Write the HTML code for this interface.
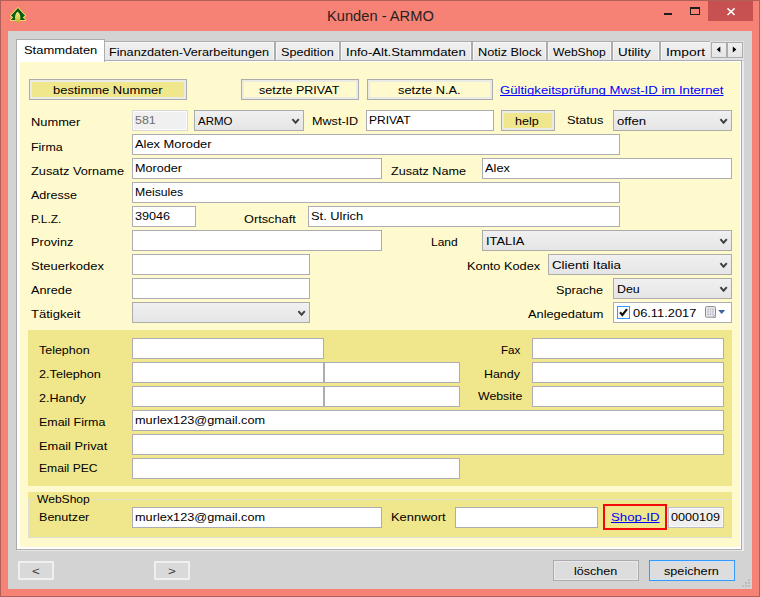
<!DOCTYPE html>
<html><head><meta charset="utf-8"><title>Kunden - ARMO</title>
<style>
html,body{margin:0;padding:0}
body{width:760px;height:597px;position:relative;overflow:hidden;background:#f58274;font-family:"Liberation Sans",sans-serif;font-size:11.5px;color:#000}
body *{box-sizing:border-box}
#frame{position:absolute;left:0;top:0;width:760px;height:597px;border:1px solid #b25f58}
#client{position:absolute;left:8px;top:31px;width:744px;height:558px;background:#d3d3d3}
#ico{position:absolute;left:8px;top:5px}
.t{position:absolute;white-space:nowrap;line-height:14px;transform-origin:0 50%;display:block}
.lnk{text-decoration:underline;text-decoration-skip-ink:none;text-decoration-thickness:1px;text-underline-offset:1px}
.tab{position:absolute;border:1px solid #acacac;border-bottom:none;background:linear-gradient(#f0f0f0,#e6e6e6);box-shadow:inset 1px 1px 0 #f7f7f7,inset -1px 0 0 #f7f7f7}
#page{position:absolute;left:16px;top:60px;width:726px;height:490px;border:1px solid #acacac;background:#fff}
#pagehl{position:absolute;left:17px;top:550px;width:727px;height:1px;background:#e9e9e9}
#pagehl:after{content:"";position:absolute;left:725px;top:-489px;width:2px;height:490px;background:#ececec}
#lemon{position:absolute;left:20px;top:62px;width:720px;height:485px;background:#fffacd}
#seltab{position:absolute;left:16px;top:39px;width:89px;height:23px;border:1px solid #acacac;border-bottom:none;background:#fff}
.sbtn{position:absolute;width:16px;height:16px;border:1px solid #acacac;background:linear-gradient(#f0f0f0,#e5e5e5)}
.sbtn svg{display:block}
.tb{position:absolute;border:1px solid #abadb3;background:#fff}
.tbd{position:absolute;border:1px solid #d9d9d9;background:#f0f0f0;box-shadow:inset 0 0 0 1px #fbfbfb}
.tbr{position:absolute;border:1px solid #bcbfc6;background:#f0f0f0;box-shadow:inset 0 0 0 1px #fafafa}
.cb{position:absolute;border:1px solid #acacac;background:linear-gradient(#f0f0f0,#e5e5e5)}
.chev{position:absolute;right:3px;top:7px}
.ybtn,.lbtn{position:absolute;border:1px solid #acacac;background:#ebebe6}
.ybtn i,.lbtn i{position:absolute;left:2px;top:2px;right:2px;bottom:2px;background:#f0e68c}
.lbtn i{background:#fffacd}
.khaki{position:absolute;background:#f0e68c}
#grp{position:absolute;left:28px;top:499px;width:704px;height:39px;border:1px solid #dfdfd2}
.fbtn{position:absolute;border:2px solid #efefef;background:#d9d9d9}
.wbtn{position:absolute;border:1px solid #acacac;background:#dddddd;box-shadow:inset 0 0 0 1px #e9e9e9}
.wbtn.def{border-color:#3399ff;box-shadow:inset 0 0 0 1px #cfe3f7}
#chk{position:absolute;left:617px;top:306px;width:13px;height:13px;border:1px solid #3399ff;background:#fff}
#chk svg{display:block}
</style></head>
<body>
<div id="frame"></div>
<div id="client"></div>
<svg id="ico" width="20" height="20" viewBox="8 5 20 20">
<defs><linearGradient id="cone" x1="0" y1="0" x2="0" y2="1"><stop offset="0" stop-color="#f2ee8a"/><stop offset="0.5" stop-color="#d9d458"/><stop offset="1" stop-color="#b5ab30"/></linearGradient></defs>
<path d="M18 8.1 L25.1 15.8 L22.7 17.3 L25.2 20 L10.8 20 L13.3 17.3 L10.9 15.8 Z" fill="#0a5a18" stroke="#f4ef58" stroke-width="1.7" stroke-linejoin="round" style="paint-order:stroke"/>
<path d="M17.6 11.8 C18.8 12.2 20.4 14.6 20.4 17.6 C20.4 20.8 19.3 22.9 17.7 22.9 C16.1 22.9 15.0 20.8 15.0 17.6 C15.0 14.8 16.5 12.2 17.6 11.8 Z" fill="url(#cone)"/>
</svg>
<span class="t " style="left:326.60px;top:8.80px;font-size:15px;transform:scaleX(0.9779);color:#2b2020;">Kunden - ARMO</span>
<div style="position:absolute;left:664px;top:13px;width:8px;height:2px;background:#1e1e1e"></div>
<div style="position:absolute;left:690px;top:7px;width:10px;height:8px;box-sizing:border-box;border:1px solid #1e1e1e;border-top-width:2px"></div>
<div style="position:absolute;left:708px;top:1px;width:45px;height:20px;background:#c75050"></div>
<svg style="position:absolute;left:726px;top:7px" width="10" height="10" viewBox="0 0 10 10"><path d="M1.5 1.4 L8.6 8.0 M8.6 1.4 L1.5 8.0" stroke="#fff" stroke-width="1.5" fill="none"/></svg>
<div class="tab" style="left:103px;top:41px;width:172px;height:20px;"></div>
<div class="tab" style="left:275px;top:41px;width:65px;height:20px;"></div>
<div class="tab" style="left:340px;top:41px;width:132px;height:20px;"></div>
<div class="tab" style="left:472px;top:41px;width:75px;height:20px;"></div>
<div class="tab" style="left:547px;top:41px;width:65px;height:20px;"></div>
<div class="tab" style="left:612px;top:41px;width:48px;height:20px;"></div>
<div class="tab" style="left:660px;top:41px;width:52px;height:20px;"></div>
<span class="t " style="left:109.10px;top:45.02px;font-size:11.5px;transform:scaleX(1.1028);">Finanzdaten-Verarbeitungen</span>
<span class="t " style="left:281.20px;top:45.02px;font-size:11.5px;transform:scaleX(1.0989);">Spedition</span>
<span class="t " style="left:346.30px;top:45.02px;font-size:11.5px;transform:scaleX(1.1419);">Info-Alt.Stammdaten</span>
<span class="t " style="left:477.70px;top:45.02px;font-size:11.5px;transform:scaleX(1.1072);">Notiz Block</span>
<span class="t " style="left:553.00px;top:45.02px;font-size:11.5px;transform:scaleX(1.0497);">WebShop</span>
<span class="t " style="left:617.60px;top:45.02px;font-size:11.5px;transform:scaleX(1.1635);">Utility</span>
<span class="t " style="left:665.90px;top:45.02px;font-size:11.5px;transform:scaleX(1.1997);">Import</span>
<div style="position:absolute;left:710px;top:41px;width:34px;height:19px;background:#e2e2e2"></div>
<div id="page"></div>
<div id="pagehl"></div>
<div id="lemon"></div>
<div id="seltab"></div>
<span class="t " style="left:23.90px;top:43.02px;font-size:11.5px;transform:scaleX(1.1243);">Stammdaten</span>
<div class="sbtn" style="left:711px;top:42px"><svg width="14" height="14" viewBox="0 0 14 14"><path d="M8.3 3.4 L8.3 9.6 L4.7 6.5 Z" fill="#000"/></svg></div>
<div class="sbtn" style="left:727px;top:42px"><svg width="14" height="14" viewBox="0 0 14 14"><path d="M4.8 3.4 L4.8 9.6 L8.4 6.5 Z" fill="#000"/></svg></div>
<div class="ybtn" style="left:29px;top:79px;width:158px;height:21px;"><i></i></div>
<span class="t " style="left:52.85px;top:82.77px;font-size:11.5px;transform:scaleX(1.1279);">bestimme Nummer</span>
<div class="lbtn" style="left:241px;top:79px;width:118px;height:21px;"><i></i></div>
<span class="t " style="left:258.70px;top:82.82px;font-size:11.5px;transform:scaleX(1.0895);">setzte PRIVAT</span>
<div class="lbtn" style="left:367px;top:79px;width:126px;height:21px;"><i></i></div>
<span class="t " style="left:397.70px;top:82.72px;font-size:11.5px;transform:scaleX(1.1130);">setzte N.A.</span>
<span class="t lnk" style="left:499.90px;top:83.02px;font-size:11.5px;transform:scaleX(1.1428);color:#0000ff;">Gültigkeitsprüfung Mwst-ID im Internet</span>
<span class="t " style="left:31.00px;top:115.42px;font-size:11.5px;transform:scaleX(1.1181);">Nummer</span>
<div class="tbd" style="left:132px;top:110px;width:56px;height:21px;"></div>
<span class="t " style="left:134.90px;top:113.02px;font-size:11.5px;transform:scaleX(1.0843);color:#6d6d6d;">581</span>
<div class="cb" style="left:194px;top:110px;width:110px;height:21px;"><svg class="chev" width="9" height="7" viewBox="0 0 9 7"><path d="M1.4 1.1 L4.6 4.7 L7.8 1.1" fill="none" stroke="#404040" stroke-width="1.9"/></svg></div>
<span class="t " style="left:197.80px;top:114.02px;font-size:11.5px;transform:scaleX(0.9971);">ARMO</span>
<span class="t " style="left:312.00px;top:114.02px;font-size:11.5px;transform:scaleX(1.0959);">Mwst-ID</span>
<div class="tb" style="left:366px;top:110px;width:128px;height:21px;"></div>
<span class="t " style="left:368.90px;top:113.02px;font-size:11.5px;transform:scaleX(1.0421);">PRIVAT</span>
<div class="ybtn" style="left:501px;top:110px;width:54px;height:21px;"><i></i></div>
<span class="t " style="left:515.30px;top:113.52px;font-size:11.5px;transform:scaleX(1.0898);">help</span>
<span class="t " style="left:567.00px;top:113.02px;font-size:11.5px;transform:scaleX(1.1134);">Status</span>
<div class="cb" style="left:613px;top:110px;width:119px;height:21px;"><svg class="chev" width="9" height="7" viewBox="0 0 9 7"><path d="M1.4 1.1 L4.6 4.7 L7.8 1.1" fill="none" stroke="#404040" stroke-width="1.9"/></svg></div>
<span class="t " style="left:616.80px;top:114.02px;font-size:11.5px;transform:scaleX(1.1431);">offen</span>
<span class="t " style="left:31.00px;top:139.82px;font-size:11.5px;transform:scaleX(1.0785);">Firma</span>
<div class="tb" style="left:132px;top:134px;width:488px;height:21px;"></div>
<span class="t " style="left:134.90px;top:137.02px;font-size:11.5px;transform:scaleX(1.1186);">Alex Moroder</span>
<span class="t " style="left:31.00px;top:163.62px;font-size:11.5px;transform:scaleX(1.1107);">Zusatz Vorname</span>
<div class="tb" style="left:132px;top:158px;width:250px;height:21px;"></div>
<span class="t " style="left:134.90px;top:161.02px;font-size:11.5px;transform:scaleX(1.0951);">Moroder</span>
<span class="t " style="left:390.90px;top:163.52px;font-size:11.5px;transform:scaleX(1.0954);">Zusatz Name</span>
<div class="tb" style="left:482px;top:158px;width:250px;height:21px;"></div>
<span class="t " style="left:484.90px;top:161.02px;font-size:11.5px;transform:scaleX(1.1132);">Alex</span>
<span class="t " style="left:31.00px;top:187.72px;font-size:11.5px;transform:scaleX(1.0905);">Adresse</span>
<div class="tb" style="left:132px;top:182px;width:488px;height:21px;"></div>
<span class="t " style="left:134.90px;top:185.02px;font-size:11.5px;transform:scaleX(1.0622);">Meisules</span>
<span class="t " style="left:31.00px;top:211.72px;font-size:11.5px;transform:scaleX(1.0411);">P.L.Z.</span>
<div class="tb" style="left:132px;top:206px;width:64px;height:21px;"></div>
<span class="t " style="left:134.90px;top:209.02px;font-size:11.5px;transform:scaleX(1.0975);">39046</span>
<span class="t " style="left:244.10px;top:212.22px;font-size:11.5px;transform:scaleX(1.1103);">Ortschaft</span>
<div class="tb" style="left:308px;top:206px;width:312px;height:21px;"></div>
<span class="t " style="left:310.90px;top:209.02px;font-size:11.5px;transform:scaleX(1.1170);">St. Ulrich</span>
<span class="t " style="left:31.00px;top:235.02px;font-size:11.5px;transform:scaleX(1.1029);">Provinz</span>
<div class="tb" style="left:132px;top:230px;width:250px;height:21px;"></div>
<span class="t " style="left:431.10px;top:234.82px;font-size:11.5px;transform:scaleX(1.0435);">Land</span>
<div class="cb" style="left:482px;top:230px;width:250px;height:21px;"><svg class="chev" width="9" height="7" viewBox="0 0 9 7"><path d="M1.4 1.1 L4.6 4.7 L7.8 1.1" fill="none" stroke="#404040" stroke-width="1.9"/></svg></div>
<span class="t " style="left:485.80px;top:234.02px;font-size:11.5px;transform:scaleX(1.1168);">ITALIA</span>
<span class="t " style="left:31.00px;top:258.52px;font-size:11.5px;transform:scaleX(1.1290);">Steuerkodex</span>
<div class="tb" style="left:132px;top:254px;width:178px;height:21px;"></div>
<span class="t " style="left:467.00px;top:259.02px;font-size:11.5px;transform:scaleX(1.1114);">Konto Kodex</span>
<div class="cb" style="left:548px;top:254px;width:184px;height:21px;"><svg class="chev" width="9" height="7" viewBox="0 0 9 7"><path d="M1.4 1.1 L4.6 4.7 L7.8 1.1" fill="none" stroke="#404040" stroke-width="1.9"/></svg></div>
<span class="t " style="left:551.80px;top:258.02px;font-size:11.5px;transform:scaleX(1.1589);">Clienti Italia</span>
<span class="t " style="left:31.00px;top:282.52px;font-size:11.5px;transform:scaleX(1.1055);">Anrede</span>
<div class="tb" style="left:132px;top:278px;width:178px;height:21px;"></div>
<span class="t " style="left:556.00px;top:282.62px;font-size:11.5px;transform:scaleX(1.0995);">Sprache</span>
<div class="cb" style="left:613px;top:278px;width:119px;height:21px;"><svg class="chev" width="9" height="7" viewBox="0 0 9 7"><path d="M1.4 1.1 L4.6 4.7 L7.8 1.1" fill="none" stroke="#404040" stroke-width="1.9"/></svg></div>
<span class="t " style="left:616.80px;top:282.02px;font-size:11.5px;transform:scaleX(1.0763);">Deu</span>
<span class="t " style="left:31.00px;top:307.02px;font-size:11.5px;transform:scaleX(1.1344);">Tätigkeit</span>
<div class="cb" style="left:132px;top:302px;width:178px;height:21px;"><svg class="chev" width="9" height="7" viewBox="0 0 9 7"><path d="M1.4 1.1 L4.6 4.7 L7.8 1.1" fill="none" stroke="#404040" stroke-width="1.9"/></svg></div>
<span class="t " style="left:527.80px;top:306.72px;font-size:11.5px;transform:scaleX(1.1111);">Anlegedatum</span>
<div class="tb" style="left:613px;top:302px;width:119px;height:21px;"></div>
<div id="chk"><svg width="11" height="11" viewBox="0 0 11 11"><path d="M2 5.2 L4.4 8.0 L9 2.2" fill="none" stroke="#111" stroke-width="2.1"/></svg></div>
<span class="t " style="left:633.20px;top:306.02px;font-size:11.5px;transform:scaleX(1.1163);">06.11.2017</span>
<svg style="position:absolute;left:705px;top:306px" width="22" height="13" viewBox="0 0 22 13">
<path d="M1.5 0.6 h8 a1 1 0 0 1 1 1 v7.2 l-2.4 2.4 h-6.6 a1 1 0 0 1 -1 -1 v-8.6 a1 1 0 0 1 1 -1 z" fill="#ececec" stroke="#8b8b8b" stroke-width="1"/>
<path d="M10.6 8.6 v2.8 h-2.8" fill="none" stroke="#9c9c9c" stroke-width="1"/>
<rect x="2.2" y="2.6" width="6.6" height="6.6" fill="#b9bdca"/>
<path d="M2.2 4.8h6.6M2.2 7h6.6M4.4 2.6v6.6M6.6 2.6v6.6" stroke="#f2f2f2" stroke-width="0.7"/>
<path d="M13.2 4.1 L20.2 4.1 L16.7 8.1 Z" fill="#3b639e"/></svg>
<div class="khaki" style="left:28px;top:330px;width:704px;height:156px"></div>
<span class="t " style="left:39.00px;top:343.02px;font-size:11.5px;transform:scaleX(1.0840);">Telephon</span>
<div class="tb" style="left:132px;top:338px;width:192px;height:21px;"></div>
<span class="t " style="left:501.00px;top:343.02px;font-size:11.5px;transform:scaleX(1.0120);">Fax</span>
<div class="tb" style="left:532px;top:338px;width:192px;height:21px;"></div>
<span class="t " style="left:39.00px;top:366.82px;font-size:11.5px;transform:scaleX(1.1001);">2.Telephon</span>
<div class="tb" style="left:132px;top:362px;width:192px;height:21px;"></div>
<div class="tb" style="left:324px;top:362px;width:136px;height:21px;"></div>
<span class="t " style="left:483.90px;top:366.82px;font-size:11.5px;transform:scaleX(1.0798);">Handy</span>
<div class="tb" style="left:532px;top:362px;width:192px;height:21px;"></div>
<span class="t " style="left:39.00px;top:390.62px;font-size:11.5px;transform:scaleX(1.0925);">2.Handy</span>
<div class="tb" style="left:132px;top:386px;width:192px;height:21px;"></div>
<div class="tb" style="left:324px;top:386px;width:136px;height:21px;"></div>
<span class="t " style="left:478.10px;top:389.02px;font-size:11.5px;transform:scaleX(1.0718);">Website</span>
<div class="tb" style="left:532px;top:386px;width:192px;height:21px;"></div>
<span class="t " style="left:39.00px;top:414.52px;font-size:11.5px;transform:scaleX(1.0825);">Email Firma</span>
<div class="tb" style="left:132px;top:410px;width:592px;height:21px;"></div>
<span class="t " style="left:134.90px;top:413.02px;font-size:11.5px;transform:scaleX(1.1047);">murlex123@gmail.com</span>
<span class="t " style="left:39.00px;top:438.92px;font-size:11.5px;transform:scaleX(1.1116);">Email Privat</span>
<div class="tb" style="left:132px;top:434px;width:592px;height:21px;"></div>
<span class="t " style="left:39.00px;top:460.52px;font-size:11.5px;transform:scaleX(1.0539);">Email PEC</span>
<div class="tb" style="left:132px;top:458px;width:328px;height:21px;"></div>
<div class="khaki" style="left:28px;top:492px;width:704px;height:46px"></div>
<div id="grp"></div>
<div style="position:absolute;left:35px;top:496px;width:57px;height:8px;background:#f0e68c"></div>
<span class="t " style="left:37.10px;top:492.02px;font-size:11.5px;transform:scaleX(1.0497);">WebShop</span>
<span class="t " style="left:39.10px;top:510.02px;font-size:11.5px;transform:scaleX(1.0929);">Benutzer</span>
<div class="tb" style="left:132px;top:507px;width:250px;height:21px;"></div>
<span class="t " style="left:134.90px;top:510.02px;font-size:11.5px;transform:scaleX(1.1047);">murlex123@gmail.com</span>
<span class="t " style="left:390.85px;top:510.02px;font-size:11.5px;transform:scaleX(1.1227);">Kennwort</span>
<div class="tb" style="left:455px;top:507px;width:143px;height:21px;"></div>
<div style="position:absolute;left:603px;top:504px;width:64px;height:26px;box-sizing:border-box;border:2px solid #f40a0a"></div>
<span class="t lnk" style="left:610.85px;top:509.77px;font-size:11.5px;transform:scaleX(1.1510);color:#0000ff;">Shop-ID</span>
<div class="tbr" style="left:668px;top:507px;width:56px;height:21px;"></div>
<span class="t " style="left:670.90px;top:510.02px;font-size:11.5px;transform:scaleX(1.0945);">0000109</span>
<div class="fbtn" style="left:18px;top:561px;width:36px;height:19px;"></div>
<span class="t " style="left:32.10px;top:564.02px;font-size:11.5px;transform:scaleX(1.1614);color:#3a3a3a;">&lt;</span>
<div class="fbtn" style="left:154px;top:561px;width:36px;height:19px;"></div>
<span class="t " style="left:168.10px;top:564.02px;font-size:11.5px;transform:scaleX(1.1614);color:#3a3a3a;">&gt;</span>
<div class="wbtn" style="left:553px;top:560px;width:86px;height:21px;"></div>
<span class="t " style="left:573.80px;top:563.92px;font-size:11.5px;transform:scaleX(1.0923);">löschen</span>
<div class="wbtn def" style="left:649px;top:560px;width:86px;height:21px;"></div>
<span class="t " style="left:664.10px;top:564.02px;font-size:11.5px;transform:scaleX(1.1010);">speichern</span>
<div style="position:absolute;left:748px;top:579px;width:2px;height:2px;background:#bdbdbd"></div><div style="position:absolute;left:745px;top:582px;width:2px;height:2px;background:#bdbdbd"></div><div style="position:absolute;left:748px;top:582px;width:2px;height:2px;background:#bdbdbd"></div><div style="position:absolute;left:742px;top:585px;width:2px;height:2px;background:#bdbdbd"></div><div style="position:absolute;left:745px;top:585px;width:2px;height:2px;background:#bdbdbd"></div><div style="position:absolute;left:748px;top:585px;width:2px;height:2px;background:#bdbdbd"></div>
</body></html>
